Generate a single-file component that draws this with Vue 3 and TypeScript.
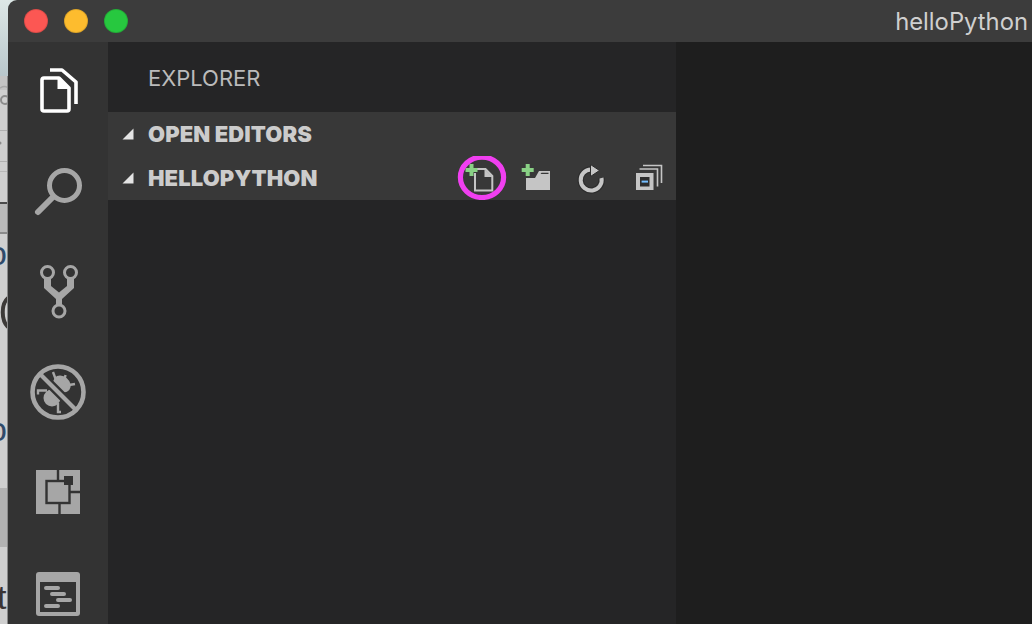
<script setup lang="ts">
const sections = ['OPEN EDITORS', 'HELLOPYTHON']
</script>

<template>
  <div class="desktop">
    <svg class="backdrop" viewBox="0 0 8 624" width="8" height="624" aria-hidden="true">
      <rect x="0" y="76" width="8" height="548" fill="#cfcfcf" />
      <rect x="0" y="76" width="8" height="14" fill="#c4c4c4" />
      <circle cx="5" cy="100" r="4" fill="none" stroke="#8c8c8c" stroke-width="2" />
      <path d="M0 88 q5 -3 8 0" fill="none" stroke="#a8a8a8" stroke-width="1.5" />
      <rect x="0" y="130" width="8" height="1" fill="#b0b0b0" />
      <rect x="0" y="161" width="8" height="1" fill="#b0b0b0" />
      <rect x="0" y="171" width="8" height="1" fill="#b8b8b8" />
      <circle cx="0" cy="143" r="1.5" fill="#8c8c8c" />
      <rect x="0" y="202" width="8" height="2" fill="#4a4a4a" />
      <rect x="0" y="204" width="8" height="28" fill="#bababa" />
      <rect x="0" y="232" width="8" height="2" fill="#8a8a8a" />
      <text x="-12" y="265" class="glyph blue">o</text>
      <path d="M8 298 C1 304 1 320 8 327" fill="none" stroke="#3d3a38" stroke-width="4" />
      <rect x="7" y="305" width="1" height="14" fill="#6a8cb0" />
      <text x="-12" y="441" class="glyph blue">o</text>
      <rect x="0" y="488" width="8" height="59" fill="#b2b2b2" />
      <text x="-3" y="609" class="glyph dark">t</text>
      <rect x="7" y="76" width="1" height="548" fill="#8a8a8a" />
    </svg>

    <div class="window">
      <header class="titlebar">
        <div class="lights">
          <span class="light red"></span>
          <span class="light amber"></span>
          <span class="light green"></span>
        </div>
        <span class="title">helloPython</span>
      </header>

      <div class="workbench">
        <nav class="activity">
          <div class="slot">
            <svg viewBox="8 42 100 100" width="100" height="100" aria-hidden="true">
              <path d="M50 70 H62 L76 82 V104" fill="none" stroke="#fff" stroke-width="3.6" stroke-linejoin="round" />
              <path d="M42 80 Q42 78 44 78 H59 L69 88 V109 Q69 111 67 111 H44 Q42 111 42 109 Z" fill="#333" stroke="#fff" stroke-width="3.6" stroke-linejoin="round" />
              <path d="M57.5 77 L70.5 89 H57.5 Z" fill="#fff" />
            </svg>
          </div>
          <div class="slot">
            <svg viewBox="8 142 100 100" width="100" height="100" aria-hidden="true">
              <circle cx="64.5" cy="185.5" r="15" fill="none" stroke="#a6a6a6" stroke-width="5" />
              <path d="M53 197 L38 212" stroke="#a6a6a6" stroke-width="6" stroke-linecap="round" />
            </svg>
          </div>
          <div class="slot">
            <svg viewBox="8 242 100 100" width="100" height="100" aria-hidden="true">
              <g fill="none" stroke="#a6a6a6">
                <circle cx="47.5" cy="272.5" r="6" stroke-width="3" />
                <circle cx="70.5" cy="272.5" r="6" stroke-width="3" />
                <circle cx="59" cy="311" r="6" stroke-width="3" />
              </g>
              <path d="M44 278.5 H51 V286 L59 292.5 L67 286 V278.5 H74 V288 L62 299 V305 H56 V299 L44 288 Z" fill="#a6a6a6" />
            </svg>
          </div>
          <div class="slot">
            <svg viewBox="8 342 100 100" width="100" height="100" aria-hidden="true">
              <circle cx="58" cy="392" r="25.5" fill="none" stroke="#a6a6a6" stroke-width="4.6" />
              <g fill="#a6a6a6">
                <circle cx="52" cy="398" r="8.5" />
                <ellipse cx="62" cy="384" rx="9.5" ry="7.5" transform="rotate(40 62 384)" />
              </g>
              <g fill="none" stroke="#a6a6a6" stroke-width="2.4">
                <path d="M53 372 L56 380 M65.5 375 L64 382 M75 384 L66 385.5 M38 394.5 V390.5 H47 M61 412 H58 V403" />
              </g>
              <path d="M42 376 L74 408" stroke="#333" stroke-width="9" />
              <path d="M40 374 L76 410" stroke="#a6a6a6" stroke-width="4.2" />
            </svg>
          </div>
          <div class="slot">
            <svg viewBox="8 442 100 100" width="100" height="100" aria-hidden="true">
              <rect x="36" y="470" width="44" height="44" fill="#a6a6a6" />
              <path d="M58 470 V481 M59.5 503 V514 M70 492 H80" stroke="#333" stroke-width="2.4" />
              <rect x="46.5" y="481" width="23" height="22" fill="#a6a6a6" stroke="#333" stroke-width="2.4" />
              <rect x="64" y="476" width="9" height="9" fill="#333" />
            </svg>
          </div>
          <div class="slot">
            <svg viewBox="8 542 100 100" width="100" height="100" aria-hidden="true">
              <rect x="36" y="572" width="44" height="44" rx="3" fill="#a6a6a6" />
              <rect x="40" y="582" width="36" height="30" fill="#333" />
              <g stroke="#a6a6a6" stroke-width="4" stroke-linecap="round">
                <path d="M46 588 H58 M52 594 H64 M58 600 H70 M46 606 H58" />
              </g>
            </svg>
          </div>
        </nav>

        <aside class="sidebar">
          <div class="sidebar-title">EXPLORER</div>
          <div class="sections">
            <div v-for="(name, i) in sections" :key="name" class="section">
              <svg class="twist" viewBox="0 0 12 12" width="12" height="12" aria-hidden="true">
                <path d="M0.5 11.5 H11.5 V0.5 Z" fill="#e4e4e4" />
              </svg>
              <span class="section-name">{{ name }}</span>
              <div v-if="i === 1" class="actions">
                <svg viewBox="454 156 56 44" width="56" height="44" aria-hidden="true">
                  <path d="M475 173 V190.5 H492.3 V176 L485.5 169 H477" fill="none" stroke="#c5c5c5" stroke-width="2" />
                  <path d="M484.5 169 V177 H492.5 Z" fill="#c5c5c5" />
                  <path d="M471.5 164 V176 M465.5 170 H477.5" stroke="#89d185" stroke-width="4" />
                  <ellipse cx="482" cy="177.3" rx="21.6" ry="20.2" fill="none" stroke="#f03ff0" stroke-width="5.2" />
                </svg>
                <svg viewBox="510 156 56 44" width="56" height="44" aria-hidden="true">
                  <path d="M526 178 H535 L539 171 H550 V190 H526 Z" fill="#c5c5c5" />
                  <path d="M540.5 174 L541.5 172.8 H548.5 V174 Z" fill="#383838" />
                  <path d="M527.7 164 V176 M521.7 170 H533.7" stroke="#383838" stroke-width="7" />
                  <path d="M527.7 164 V176 M521.7 170 H533.7" stroke="#89d185" stroke-width="4" />
                </svg>
                <svg viewBox="566 156 54 44" width="54" height="44" aria-hidden="true">
                  <path d="M591 169.5 A10.5 10.5 0 1 0 601.5 178" fill="none" stroke="#2c2c2c" stroke-width="6.4" />
                  <path d="M591 169.5 A10.5 10.5 0 1 0 601.5 178" fill="none" stroke="#c5c5c5" stroke-width="4" />
                  <path d="M590.5 164.5 L599.5 170.5 L590.5 176.5 Z" fill="#c5c5c5" stroke="#2c2c2c" stroke-width="1" />
                </svg>
                <svg viewBox="620 156 56 44" width="56" height="44" aria-hidden="true">
                  <path d="M643 165.5 H661.5 V183" fill="none" stroke="#c5c5c5" stroke-width="1.6" />
                  <path d="M639.5 169 H657.5 V186.5" fill="none" stroke="#c5c5c5" stroke-width="1.6" />
                  <rect x="636" y="173" width="17.5" height="17" fill="#c5c5c5" />
                  <rect x="640" y="177" width="9.5" height="9.5" fill="#2d2d2d" />
                  <rect x="641.6" y="180.6" width="6.4" height="2" fill="#75beff" />
                </svg>
              </div>
            </div>
          </div>
        </aside>

        <main class="editor"></main>
      </div>
    </div>
  </div>
</template>

<style>
html,
body {
  margin: 0;
  background: #cfcfcf;
}
</style>

<style scoped>
.desktop {
  display: flex;
  width: 1032px;
  height: 624px;
  overflow: hidden;
  background: linear-gradient(180deg, #dde7e6 0, #b9c7cc 76px, #cfcfcf 76px);
}

.backdrop {
  flex: none;
  display: block;
}

.glyph {
  font-family: 'Liberation Sans', sans-serif;
  font-size: 34px;
}

.blue {
  fill: #2f4a6a;
}

.dark {
  fill: #3a3434;
}

.window {
  flex: 1;
  min-width: 0;
  display: flex;
  flex-direction: column;
  border-top-left-radius: 9px;
  overflow: hidden;
}

.titlebar {
  flex: none;
  height: 42px;
  display: flex;
  align-items: center;
  justify-content: space-between;
  background: #3c3c3c;
  padding: 0 4px 0 16px;
}

.lights {
  display: flex;
  gap: 16px;
}

.light {
  width: 24px;
  height: 24px;
  border-radius: 50%;
  box-sizing: border-box;
  border: 1px solid rgba(0, 0, 0, 0.12);
}

.red {
  background: #fc5753;
}

.amber {
  background: #fdbc2e;
}

.green {
  background: #27c83f;
}

.title {
  font-family: Inter, 'Noto Sans', sans-serif;
  font-size: 23.8px;
  color: #cfcfcf;
}

.workbench {
  flex: 1;
  min-height: 0;
  display: flex;
}

.activity {
  flex: none;
  width: 100px;
  background: #333333;
  display: flex;
  flex-direction: column;
  overflow: hidden;
}

.slot {
  flex: none;
  height: 100px;
}

.slot svg {
  display: block;
}

.sidebar {
  flex: none;
  width: 568px;
  background: #252526;
}

.sidebar-title {
  height: 70px;
  padding-left: 40px;
  display: flex;
  align-items: center;
  box-sizing: border-box;
  padding-top: 2px;
  font-family: Inter, 'Noto Sans', sans-serif;
  font-size: 22px;
  color: #bbbbbb;
}

.sections {
  background: #383838;
}

.section {
  height: 44px;
  display: flex;
  align-items: center;
  position: relative;
  padding-left: 14px;
  font-family: Inter, 'Noto Sans', sans-serif;
  font-size: 22px;
  font-weight: 900;
  letter-spacing: 0.1px;
  color: #cccccc;
}

.twist {
  flex: none;
  margin-right: 14px;
}

.section-name {
  flex: 1;
}

.actions {
  display: flex;
  flex: none;
}

.actions svg {
  display: block;
}

.editor {
  flex: 1;
  background: #1e1e1e;
}
</style>
